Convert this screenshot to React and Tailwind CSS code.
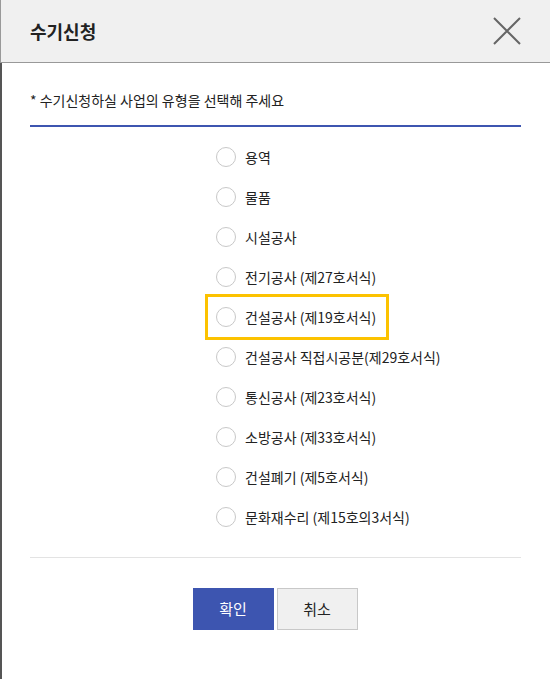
import React from "react";

const items = [
  "용역",
  "물품",
  "시설공사",
  "전기공사 (제27호서식)",
  "건설공사 (제19호서식)",
  "건설공사 직접시공분(제29호서식)",
  "통신공사 (제23호서식)",
  "소방공사 (제33호서식)",
  "건설폐기 (제5호서식)",
  "문화재수리 (제15호의3서식)",
];

export default function App() {
  return (
    <div
      className="w-[550px] h-[679px] bg-white overflow-hidden text-[#222]"
      style={{ fontFamily: '"Noto Sans CJK KR", "Noto Sans", sans-serif' }}
    >
      <div className="h-[63px] bg-[#f0f0f0] border-b border-l border-[#999] flex items-center justify-between pl-[29px] pr-[29px]">
        <h1 className="text-[18px] font-bold leading-none text-[#222]">수기신청</h1>
        <svg width="28" height="28" viewBox="0 0 28 28" className="block">
          <path d="M1 1 L27 27 M27 1 L1 27" stroke="#666" strokeWidth="2" fill="none" />
        </svg>
      </div>
      <div className="h-[616px] border-l-2 border-[#555] pl-[28px] pr-[29px]">
        <p className="pt-[27px] text-[14px] leading-[20px] text-[#222]">* 수기신청하실 사업의 유형을 선택해 주세요</p>
        <div className="mt-[15px] h-[2px] bg-[#3d55b0]" />
        <ul className="mt-[10px] pl-[178px] flex flex-col items-start">
          {items.map((t, i) => (
            <li
              key={t}
              className={
                "h-10 flex items-center pl-2 pr-[3px] " +
                (i === 4 ? "outline-[3px] outline-solid outline-[#fcc200] pr-[10px]" : "")
              }
            >
              <span className="w-5 h-5 rounded-full border border-[#c8c8c8] bg-white shrink-0" />
              <span className="ml-[9px] text-[14px] leading-[20px] text-[#222] whitespace-nowrap">{t}</span>
            </li>
          ))}
        </ul>
        <div className="mt-5 h-px bg-[#e3e3e3]" />
        <div className="mt-[30px] flex justify-center gap-[3px] pr-[1px]">
          <button className="w-[81px] h-[42px] bg-[#3d55b0] text-white text-[15px]">확인</button>
          <button className="w-[81px] h-[42px] bg-[#f0f0f0] border border-[#c8c8c8] text-[#222] text-[15px]">취소</button>
        </div>
      </div>
    </div>
  );
}
